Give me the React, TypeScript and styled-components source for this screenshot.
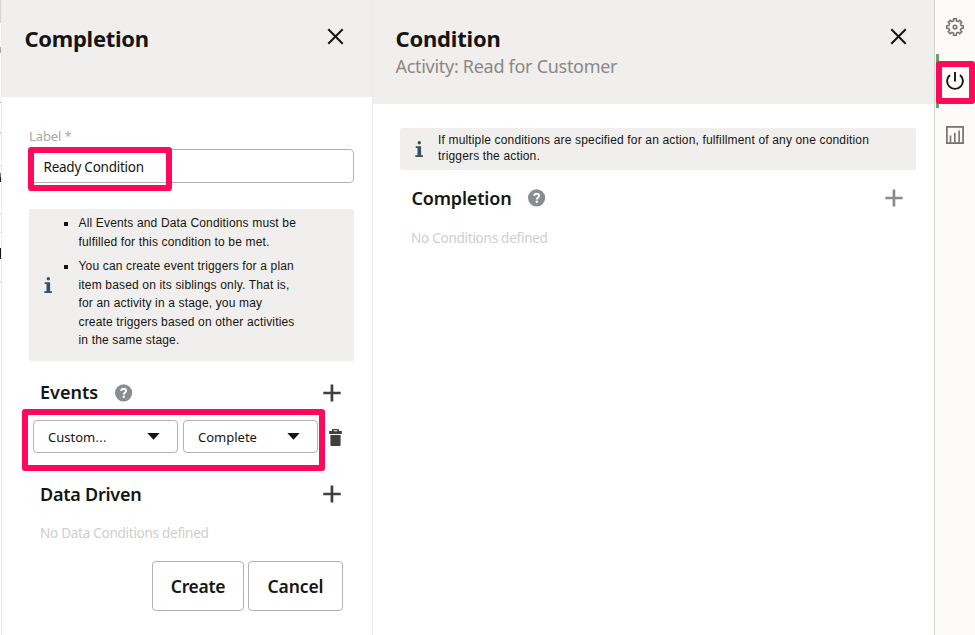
import React from "react";
import styled, { createGlobalStyle } from "styled-components";

const Global = createGlobalStyle`
  * { box-sizing: border-box; }
  body { margin: 0; background: #fff; font-family: "Noto Sans", "Open Sans", sans-serif; color: #161513; }
  ul, h1, h2, p { margin: 0; padding: 0; font-weight: inherit; }
  svg { display: block; flex: none; }
  button { font: inherit; color: inherit; background: none; border: 0; padding: 0; }
`;

const Page = styled.div`
  display: flex;
  width: 975px;
  height: 635px;
  overflow: hidden;
`;

/* Edge of the canvas behind the drawer */
const CanvasEdge = styled.div`
  width: 1px;
  flex: none;
`;
const EdgeMark = styled.div<{ $h: number; $c?: string }>`
  height: ${(p) => p.$h}px;
  background: ${(p) => p.$c || "transparent"};
`;

const Panel = styled.section<{ $w: number; $ruled?: boolean }>`
  width: ${(p) => p.$w}px;
  flex: none;
  border: solid #ececec;
  border-width: ${(p) => (p.$ruled ? "0 1px" : "0")};
`;

const Header = styled.header<{ $h: number; $pad: string }>`
  height: ${(p) => p.$h}px;
  padding: ${(p) => p.$pad};
  display: flex;
  justify-content: space-between;
  align-items: flex-start;
  background: #f0efed;
`;

const Txt = styled.div<{ $size: number; $lh: number; $weight?: number; $color?: string; $ls?: number; $lift?: number }>`
  font-size: ${(p) => p.$size}px;
  line-height: ${(p) => p.$lh}px;
  font-weight: ${(p) => p.$weight || 400};
  color: ${(p) => p.$color || "#161513"};
  letter-spacing: ${(p) => p.$ls || 0}px;
  padding-bottom: ${(p) => p.$lift || 0}px;
  white-space: nowrap;
`;

const Ellipsis = styled.span`
  font-size: 15.5px;
  font-weight: 300;
  line-height: 1;
`;

const CloseButton = styled.button`
  margin-top: 9px;
`;

const Field = styled.div`
  position: relative;
  height: 34px;
  border: 1px solid #b3b2b1;
  border-radius: 4px;
  padding: 2px 0 0 13.5px;
  display: flex;
  align-items: center;
`;

const Highlight = styled.div<{ $l: number; $t: number; $w: number; $h: number }>`
  position: absolute;
  left: ${(p) => p.$l}px;
  top: ${(p) => p.$t}px;
  width: ${(p) => p.$w}px;
  height: ${(p) => p.$h}px;
  border: 6px solid #ff0a5b;
  border-radius: 3px;
  pointer-events: none;
`;

const LeftBody = styled.div`
  padding: 27px 18px 0 27px;
`;

const Notice = styled.div<{ $h: number; $mt: number; $pl: number }>`
  margin-top: ${(p) => p.$mt}px;
  height: ${(p) => p.$h}px;
  padding-left: ${(p) => p.$pl}px;
  display: flex;
  align-items: center;
  background: #f0efed;
  border-radius: 2px;
  font-family: "Liberation Sans", Arial, sans-serif;
  font-size: 12px;
`;

const NoticeList = styled.ul`
  list-style: none;
  padding: 5px 0 0 12px;
  align-self: flex-start;
`;
const NoticeItem = styled.li`
  display: flex;
  white-space: pre;
  line-height: 18.5px;
  letter-spacing: 0.16px;
  margin-bottom: 6px;
  &::before {
    content: "";
    width: 4px;
    height: 4px;
    margin: 8px 10.5px 0 0;
    background: #161513;
  }
`;

const NoticeText = styled.p`
  white-space: pre;
  line-height: 16px;
  letter-spacing: 0.16px;
  padding: 0 0 2px 15px;
`;

const SectionRow = styled.div<{ $mt: number; $pad: string }>`
  margin-top: ${(p) => p.$mt}px;
  padding: ${(p) => p.$pad};
  height: 30px;
  display: flex;
  align-items: center;
`;
const Spacer = styled.div`
  flex: 1;
`;
const HelpWrap = styled.span`
  margin-left: 17px;
`;

const EventRow = styled.div`
  position: relative;
  margin-top: 12px;
  height: 33px;
  padding-left: 4px;
  display: flex;
  align-items: center;
`;
const Select = styled.button<{ $w: number; $mr: number; $pr: number }>`
  width: ${(p) => p.$w}px;
  height: 33px;
  margin-right: ${(p) => p.$mr}px;
  padding: 0 ${(p) => p.$pr}px 0 14px;
  border: 1px solid #b3b2b1;
  border-radius: 4px;
  display: flex;
  align-items: center;
  justify-content: space-between;
`;
const TrashButton = styled.button`
  padding-top: 2px;
`;

const Empty = styled.div<{ $mt: number }>`
  margin-top: ${(p) => p.$mt}px;
  padding-left: 11px;
`;

const Actions = styled.div`
  display: flex;
  gap: 4px;
  margin-top: 18px;
  padding-left: 123px;
`;
const ActionButton = styled.button<{ $w: number }>`
  width: ${(p) => p.$w}px;
  height: 50px;
  border: 1px solid #b3b2b1;
  border-radius: 4px;
  display: flex;
  align-items: center;
  justify-content: center;
`;

const RightBody = styled.div`
  padding: 0 18px 0 27px;
`;

const Rail = styled.nav`
  width: 41px;
  flex: none;
  border-left: 1px solid #d5d3d0;
  background: #fcfbfa;
`;
const RailItem = styled.div<{ $active?: boolean }>`
  position: relative;
  height: 54px;
  padding-left: 7px;
  margin-left: 1px;
  border-left: 3px solid ${(p) => (p.$active ? "#6aa367" : "transparent")};
  display: flex;
  align-items: center;
`;

const CloseIcon = () => (
  <svg width="17" height="17" viewBox="0 0 17 17" stroke="#161513" strokeWidth="2" fill="none">
    <path d="M1.3 1.3 15.7 15.7M15.7 1.3 1.3 15.7" />
  </svg>
);
const PlusIcon = ({ color = "#403f3d" }: { color?: string }) => (
  <svg width="18" height="18" viewBox="0 0 18 18" fill={color}>
    <path d="M7.6.5h2.7v7.3h7.4v2.5h-7.4v7.2H7.6v-7.2H.3V7.8h7.3z" />
  </svg>
);
const HelpIcon = () => (
  <svg width="18" height="18" viewBox="0 0 18 18">
    <circle cx="8.6" cy="8.8" r="8.6" fill="#8a8d90" />
    <path d="M6.2 6.9C6.3 5.4 7.3 4.7 8.7 4.7s2.4.8 2.4 2.1c0 1.6-2.3 1.8-2.3 3.7" fill="none" stroke="#fff" strokeWidth="2" />
    <circle cx="8.8" cy="12.8" r="1.2" fill="#fff" />
  </svg>
);
const InfoIcon = () => (
  <svg width="8" height="16" viewBox="0 0 8 16" fill="#3b4e63">
    <circle cx="4.3" cy="1.8" r="1.7" />
    <path d="M.7 5.3h5.4v8.9h1.9V16H.3v-1.8h2.2V7H.7z" />
  </svg>
);
const CaretIcon = () => (
  <svg width="13" height="7" viewBox="0 0 13 7" fill="#161513">
    <path d="M.3 0h12.4L6.5 6.7z" />
  </svg>
);
const TrashIcon = () => (
  <svg width="13" height="17" viewBox="0 0 13 17" fill="#403f3d">
    <path fillRule="evenodd" d="M3 2V1q0-1 1-1h5q1 0 1 1v1h2.8v3H.2V2zm1.8.2h3.4V1.2H4.8z" />
    <path d="M1.4 6h10.2v10q0 1-1 1H2.4q-1 0-1-1z" />
  </svg>
);

/* Outline of an eight-toothed cog: four corners for each tooth */
const gearPath = Array.from({ length: 8 }, (_, i) => {
  const c = (i * Math.PI) / 4;
  const at = (r: number, a: number) => `${(9 + r * Math.sin(c + a)).toFixed(2)} ${(9 - r * Math.cos(c + a)).toFixed(2)}`;
  return `${i ? "L" : "M"}${at(6.3, -0.24)}L${at(8.3, -0.17)}L${at(8.3, 0.17)}L${at(6.3, 0.24)}`;
}).join("") + "Z";
const GearIcon = () => (
  <svg width="18" height="18" viewBox="0 0 18 18" fill="none" stroke="#74726f" strokeWidth="1.5">
    <path d={gearPath} />
    <circle cx="9" cy="9" r="1.8" />
  </svg>
);
const PowerIcon = () => (
  <svg width="18" height="18" viewBox="0 0 18 18" fill="none" stroke="#161513" strokeWidth="1.9">
    <path d="M4 2.9a7.9 7.9 0 1 0 10 0M9 0v9.5" />
  </svg>
);
const ChartIcon = () => (
  <svg width="18" height="18" viewBox="0 0 18 18" fill="none" stroke="#74726f" strokeWidth="1.7">
    <path d="M.9.9h16.2v16.2H.9z" />
    <path strokeWidth="1.6" d="M4.5 16.5V9.5M8.8 16.5V6.8M13.1 16.5V4.5" />
  </svg>
);

export default function App() {
  return (
    <>
      <Global />
      <Page>
        <CanvasEdge>
          <EdgeMark $h={23} $c="#d8d6d2" />
          <EdgeMark $h={24} />
          <EdgeMark $h={6} $c="#aaa" />
          <EdgeMark $h={49} />
          <EdgeMark $h={1} $c="#aaa" />
          <EdgeMark $h={29} />
          <EdgeMark $h={1} $c="#aaa" />
          <EdgeMark $h={32} />
          <EdgeMark $h={1} $c="#ddd" />
          <EdgeMark $h={7} />
          <EdgeMark $h={4} $c="#777" />
          <EdgeMark $h={5} $c="#222" />
          <EdgeMark $h={31} />
          <EdgeMark $h={2} $c="#e6e6e6" />
          <EdgeMark $h={17} />
          <EdgeMark $h={1} $c="#ddd" />
          <EdgeMark $h={15} />
          <EdgeMark $h={11} $c="#161513" />
          <EdgeMark $h={22} />
          <EdgeMark $h={2} $c="#e0e0e0" />
        </CanvasEdge>

        <Panel $w={372} $ruled>
          <Header $h={97} $pad="19px 28px 0 22.5px">
            <Txt as="h1" $size={22} $lh={38} $weight={700} $ls={-0.28}>Completion</Txt>
            <CloseButton aria-label="Close"><CloseIcon /></CloseButton>
          </Header>
          <LeftBody>
            <Txt $size={13} $lh={25} $color="#aaa9a7" $ls={-0.1}>Label *</Txt>
            <Field>
              <Txt $size={13.5} $lh={20} $ls={-0.24}>Ready Condition</Txt>
              <Highlight $l={-2} $t={-3} $w={144} $h={44} />
            </Field>
            <Notice $h={152} $mt={26} $pl={15}>
              <InfoIcon />
              <NoticeList>
                <NoticeItem>{"All Events and Data Conditions must be\nfulfilled for this condition to be met."}</NoticeItem>
                <NoticeItem>{"You can create event triggers for a plan\nitem based on its siblings only. That is,\nfor an activity in a stage, you may\ncreate triggers based on other activities\nin the same stage."}</NoticeItem>
              </NoticeList>
            </Notice>
            <SectionRow $mt={17} $pad="0 13px 0 11px">
              <Txt as="h2" $size={18} $lh={28} $weight={600} $lift={2}>Events</Txt>
              <HelpWrap><HelpIcon /></HelpWrap>
              <Spacer />
              <PlusIcon />
            </SectionRow>
            <EventRow>
              <Select $w={145} $mr={5} $pr={17}>
                <Txt $size={13} $lh={20}>Custom<Ellipsis>…</Ellipsis></Txt>
                <CaretIcon />
              </Select>
              <Select $w={135} $mr={11} $pr={17}>
                <Txt $size={13} $lh={20}>Complete</Txt>
                <CaretIcon />
              </Select>
              <TrashButton aria-label="Delete event"><TrashIcon /></TrashButton>
              <Highlight $l={-7} $t={-11} $w={303} $h={62} />
            </EventRow>
            <SectionRow $mt={26} $pad="0 13px 0 11px">
              <Txt as="h2" $size={18} $lh={30} $weight={600} $ls={-0.25}>Data Driven</Txt>
              <Spacer />
              <PlusIcon />
            </SectionRow>
            <Empty $mt={14}>
              <Txt $size={13.5} $lh={20} $color="#cfcecd" $ls={-0.26}>No Data Conditions defined</Txt>
            </Empty>
            <Actions>
              <ActionButton $w={92}><Txt $size={17.5} $lh={24} $weight={600} $ls={-0.3}>Create</Txt></ActionButton>
              <ActionButton $w={95}><Txt $size={17.5} $lh={24} $weight={600} $ls={-0.1}>Cancel</Txt></ActionButton>
            </Actions>
          </LeftBody>
        </Panel>

        <Panel $w={561}>
          <Header $h={104} $pad="19px 27px 0 22.5px">
            <div>
              <Txt as="h1" $size={22} $lh={38} $weight={700} $ls={-0.2}>Condition</Txt>
              <Txt $size={18} $lh={18} $color="#8a8886" $ls={-0.29}>Activity: Read for Customer</Txt>
            </div>
            <CloseButton aria-label="Close"><CloseIcon /></CloseButton>
          </Header>
          <RightBody>
            <Notice $h={42} $mt={24} $pl={15}>
              <InfoIcon />
              <NoticeText>{"If multiple conditions are specified for an action, fulfillment of any one condition\ntriggers the action."}</NoticeText>
            </Notice>
            <SectionRow $mt={13} $pad="0 13px 0 11.5px">
              <Txt as="h2" $size={18} $lh={30} $weight={600} $ls={-0.18}>Completion</Txt>
              <HelpWrap><HelpIcon /></HelpWrap>
              <Spacer />
              <PlusIcon color="#8c8b8a" />
            </SectionRow>
            <Empty $mt={15}>
              <Txt $size={13.5} $lh={20} $color="#cfcecd" $ls={-0.25}>No Conditions defined</Txt>
            </Empty>
          </RightBody>
        </Panel>

        <Rail>
          <RailItem><GearIcon /></RailItem>
          <RailItem $active>
            <PowerIcon />
            <Highlight $l={-3} $t={7} $w={39} $h={43} />
          </RailItem>
          <RailItem><ChartIcon /></RailItem>
        </Rail>
      </Page>
    </>
  );
}
